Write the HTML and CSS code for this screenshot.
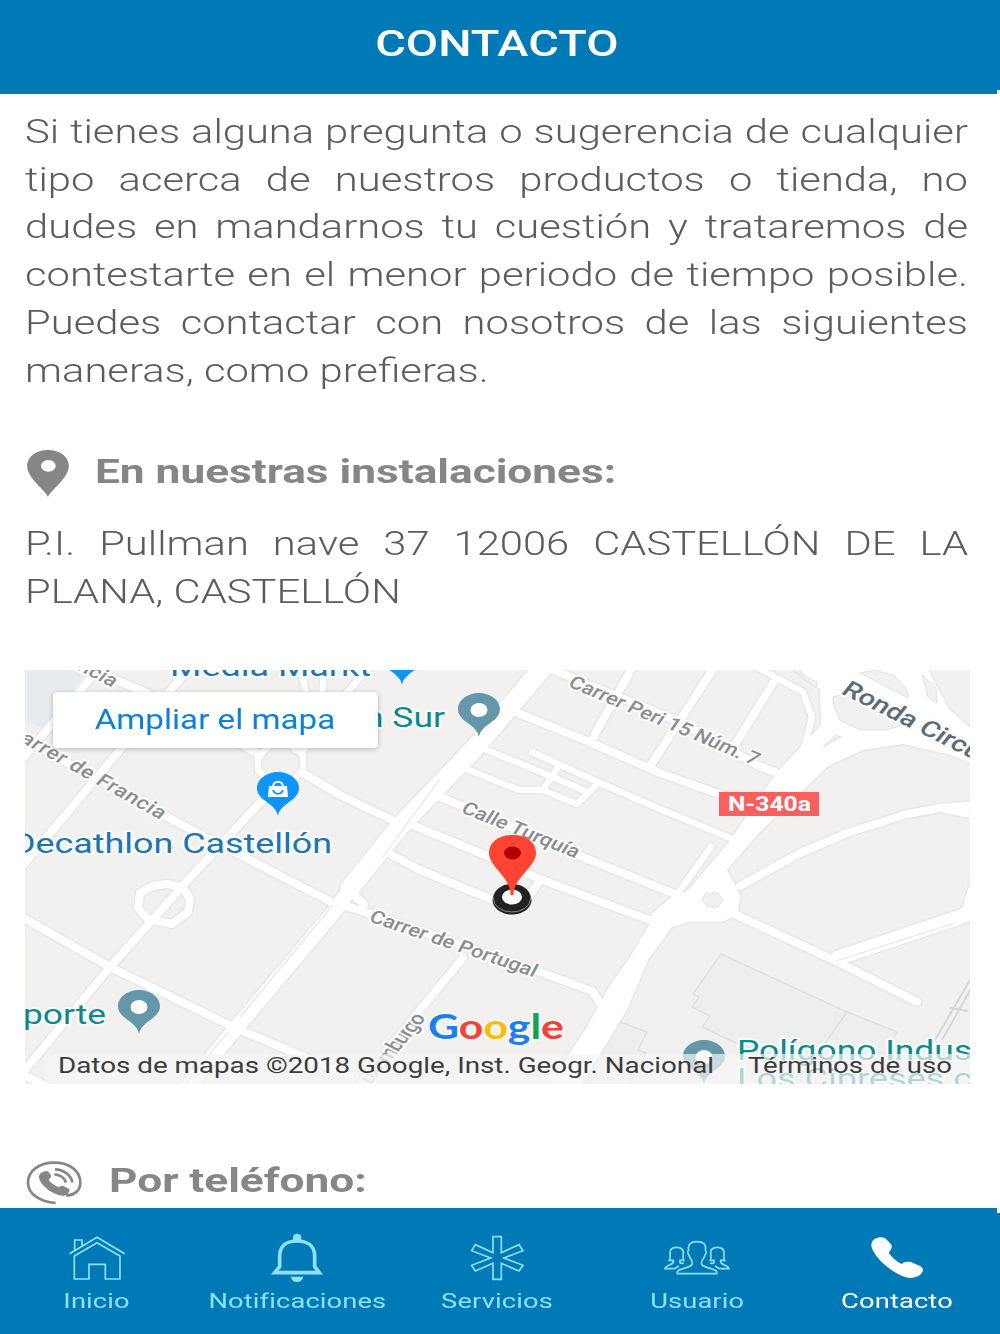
FILE: index.html
```
<!DOCTYPE html>
<html lang="es">
<head>
  <meta charset="UTF-8">
  <meta name="viewport" content="width=device-width, initial-scale=1.0">
  <title>Contacto</title>
  <link rel="stylesheet" href="styles.css">
</head>
<body>
  <header class="top-bar">
    <h1>CONTACTO</h1>
  </header>

  <main class="content">
    <p class="text intro">Si tienes alguna pregunta o sugerencia de cualquier tipo acerca de nuestros productos o tienda, no dudes en mandarnos tu cuestión y trataremos de contestarte en el menor periodo de tiempo posible. Puedes contactar con nosotros de las siguientes maneras, como prefieras.</p>

    <div class="section-title">
      <svg class="pin-icon" viewBox="78 57 132 148">
        <path fill-rule="evenodd" d="M144 202C136 180 81 145 81 108C81 80 108 60 144 60S207 80 207 108C207 145 152 180 144 202ZM145 90a22 18 0 1 0 .1 0Z"/>
      </svg>
      <h2>En nuestras instalaciones:</h2>
    </div>

    <p class="text address">P.I. Pullman nave 37 12006 CASTELLÓN DE LA PLANA, CASTELLÓN</p>

    <div class="map">
      <svg class="map-canvas" viewBox="25 670 945 414">
        <rect class="land" x="25" y="670" width="945" height="414"/>
        <path class="water" d="M25 670H86L48 728L25 722Z"/>

        <g class="building">
          <path d="M721 954L693 994L699 997L692 1007L710 1016L702 1027L740 1045L810 1065L847 1012Z"/>
          <path d="M847 1012L897 1032L870 1084H790L810 1065Z"/>
          <path d="M615 1020L647 1032L638 1050L646 1053L630 1084H585Z"/>
        </g>

        <g class="roads">
          <!-- calles del oeste -->
          <path class="r8" d="M20 762L100 667"/>
          <path class="r8" d="M20 869L120 750L192 665"/>
          <path class="r8" d="M20 737L167 817L217 843L333 903L353 908L540 972L592 991L602 1006"/>
          <path class="r8" d="M85 667L147 693L260 755"/>
          <path class="r8" d="M303 773L340 795L400 824"/>
          <path class="r8" d="M270 792L197 870L110 967L20 1076"/>
          <path class="r8" d="M20 916L110 967L233 1027L350 1076"/>
          <path class="r8" d="M20 1073L50 1088"/>
          <path class="r6" d="M300 667L308 700L298 750M324 667L322 700L304 750M370 667L295 750"/>
          <path class="r6" d="M271 744L290 744L303 755V770L292 781H270L258 770V757Z"/>
          <path class="r8" d="M153 886L167 884L183 888L190 899L188 912L172 924L148 919L138 908L140 893Z"/>

          <!-- avenida central -->
          <path class="r18" d="M546 664L473 750L400 826L350 888"/>
          <path class="r15" d="M365 868L333 913L237 1027L185 1090"/>
          <path class="r8" d="M350 890L364 905"/>

          <!-- calles del centro -->
          <path class="r8" d="M548 668L680 722L757 765L780 774"/>
          <path class="r8" d="M513 711L587 741L660 773L730 798"/>
          <path class="r6" d="M477 746L553 777L587 792"/>
          <path class="r6" d="M532 752L600 783L660 809L735 840"/>
          <path class="r6" d="M464 768L519 790L543 790L577 804L597 784M543 790L558 767"/>
          <path class="r8" d="M438 796L580 856L675 894"/>
          <path class="r8" d="M410 824L490 857L540 879L660 924"/>
          <path class="r8" d="M390 854L420 870L500 903M528 898L540 880"/>
          <path class="r8" d="M633 666L593 738M715 666L651 765M775 680L733 748"/>
          <path class="r8" d="M463 958L420 1010L355 1090"/>
          <path class="r6" d="M757 667L775 677L803 692L812 717L803 752"/>
          <path class="r6" d="M711 847L673 900L655 915"/>

          <!-- N-340a y Ronda -->
          <path class="fill" d="M797 667L820 690L821 725L777 772L728 843L690 888L680 895L655 915L628 960L610 985L585 1030L545 1090H578L627 1010L648 960L672 927L690 922L722 922L738 915L740 896L735 884L727 870L760 832L827 767L863 750L903 744L950 755L975 765V732L950 710L937 687L927 667Z"/>
          <path class="r8" d="M740 886L800 853L847 833L907 814L940 808L975 805M940 808L975 815"/>
          <path class="r8" d="M730 912L840 963L917 1002"/>
          <path class="r15" d="M838 958L960 917L980 908"/>
          <path class="r8" d="M964 915L975 880"/>
        </g>

        <!-- isletas dentro de las vías -->
        <g class="island">
          <path d="M833 697L833 704L840 720L860 730L887 730L908 723L850 692Z"/>
          <path d="M860 673L875 670L895 676L907 690L908 698Z"/>
          <path d="M922 675L936 688L937 703L928 697Z"/>
          <path d="M823 747L836 735L841 737Z"/>
          <path d="M793 671L817 682L816 688Z"/>
          <path d="M706 893H718L723 900L718 907H708L702 900Z"/>
        </g>
        <path class="median" d="M836 961L955 923M440 779L382 858M333 905L240 1017M228 1032L185 1084"/>
        <path class="rail" d="M970 980L935 1040M972 987L942 1040M950 1008L968 1011"/>

        <g class="street">
          <text transform="translate(76 669) scale(1.27 1) rotate(33)" textLength="34">ncia</text>
          <text transform="translate(19 741) scale(1.27 1) rotate(35.3)" textLength="136">arrer de Francia</text>
          <text transform="translate(567 686) scale(1.27 1) rotate(28.3)" textLength="168" lengthAdjust="spacingAndGlyphs">Carrer Peri 15 Núm. 7</text>
          <text transform="translate(460 812) scale(1.27 1) rotate(27)" textLength="102" lengthAdjust="spacingAndGlyphs">Calle Turquía</text>
          <text transform="translate(368 921) scale(1.27 1) rotate(23.3)" textLength="142" lengthAdjust="spacingAndGlyphs">Carrer de Portugal</text>
          <text transform="translate(371 1085) scale(1.27 1) rotate(-57)" textLength="80"><tspan class="faded">uxe</tspan>mburgo</text>
          <text class="ronda" transform="translate(840 693) scale(1.27 1) rotate(32.4)" textLength="126" lengthAdjust="spacingAndGlyphs">Ronda Circu</text>
        </g>

        <g class="place">
          <text class="shop" x="170" y="676" textLength="201" lengthAdjust="spacingAndGlyphs">Media Markt</text>
          <text class="shop" x="12" y="853" textLength="320" lengthAdjust="spacingAndGlyphs">Decathlon Castellón</text>
          <text x="364" y="727" textLength="81" lengthAdjust="spacingAndGlyphs">n Sur</text>
          <text x="23" y="1024" textLength="83" lengthAdjust="spacingAndGlyphs">porte</text>
          <text x="737" y="1060" textLength="235" lengthAdjust="spacingAndGlyphs">Polígono Indus</text>
          <text x="737" y="1088" textLength="235" lengthAdjust="spacingAndGlyphs">Los Cipreses c</text>
        </g>

        <defs>
          <path id="poi" d="M0 0C-2 -13 -21 -15 -21 -28C-21 -37 -11 -44 0 -44S21 -37 21 -28C21 -15 2 -13 0 0Z"/>
        </defs>
        <use href="#poi" class="poi-blue" x="402" y="685"/>
        <use href="#poi" class="poi-blue" x="278" y="816"/>
        <use href="#poi" class="poi-teal" x="479" y="737"/>
        <use href="#poi" class="poi-teal" x="139" y="1034"/>
        <use href="#poi" class="poi-teal" x="704" y="1084"/>
        <g class="dot">
          <ellipse cx="479" cy="710" rx="8.5" ry="7"/>
          <ellipse cx="139" cy="1007" rx="8.5" ry="7"/>
          <ellipse cx="704" cy="1057" rx="8.5" ry="7"/>
        </g>
        <path class="bag" d="M269 786H287L288 797H268Z"/>
        <path class="bag-handle" d="M273 787C273 780 283 780 283 787"/>
        <path class="bag-smile" d="M273 790C275 795 281 795 283 790"/>

        <rect class="shield" x="719" y="792" width="100" height="24"/>
        <text class="shield-text" x="728" y="811" textLength="83" lengthAdjust="spacingAndGlyphs">N-340a</text>

        <ellipse class="base-side" cx="512" cy="900" rx="19.5" ry="14.5"/>
        <ellipse class="base-rim" cx="512" cy="899" rx="18.5" ry="13"/>
        <ellipse class="base" cx="512" cy="896.500" rx="18" ry="12.500"/>
        <ellipse class="base-hole" cx="512" cy="897" rx="10" ry="7.5"/>
        <path class="marker" d="M510.500 895C511 877 489 867 489 853C489 842 499 835 512.500 835S536 842 536 853C536 867 514 877 513.500 895Z"/>
        <ellipse class="marker-dot" cx="512.500" cy="853" rx="8.500" ry="6.500"/>

        <text class="google" x="428" y="1039" textLength="136" lengthAdjust="spacingAndGlyphs"><tspan class="g-blue">G</tspan><tspan class="g-red">o</tspan><tspan class="g-yellow">o</tspan><tspan class="g-blue">g</tspan><tspan class="g-green">l</tspan><tspan class="g-red">e</tspan></text>

        <rect class="credits-bg" x="45" y="1054" width="925" height="30"/>
        <text class="credits" x="58" y="1073" textLength="656" lengthAdjust="spacingAndGlyphs">Datos de mapas ©2018 Google, Inst. Geogr. Nacional</text>
        <text class="credits" x="748" y="1073" textLength="204" lengthAdjust="spacingAndGlyphs">Términos de uso</text>
      </svg>
      <a class="map-button" href="#"><span>Ampliar el mapa</span></a>
    </div>

    <div class="section-title phone-title">
      <svg class="call-icon" viewBox="75 27 177 141">
        <path class="ring" d="M167 159C120 155 84 132 84 98C84 62 118 38 163 38S241 62 241 98C241 122 222 137 198 136"/>
        <path d="M117 78C120 66 134 62 144 64L153 76C155 82 148 86 146 90C152 98 164 106 176 112C181 108 186 106 190 108L208 117C211 123 203 134 192 137C164 139 115 104 117 78Z"/>
        <path class="wave" d="M163 73C180 74 194 84 198 98M165 58C192 59 214 76 217 98"/>
      </svg>
      <h2>Por teléfono:</h2>
    </div>
  </main>

  <nav class="tab-bar">
    <a class="tab" href="#">
      <svg viewBox="183 240 216 156">
        <path d="M209 311L291 262L374 311M223 318V387H267V343H316V387H360V318L291 278ZM224 301V270H246V288"/>
      </svg>
      <span>Inicio</span>
    </a>
    <a class="tab" href="#">
      <svg viewBox="783 240 216 156">
        <path class="thick" d="M839 350V318C839 286 862 273 891 273S944 286 944 318V350L958 368H824Z"/>
        <path class="solid" d="M879 270V262C879 248 904 248 904 262V270ZM873 380H909C908 401 874 401 873 380Z"/>
      </svg>
      <span>Notificaciones</span>
    </a>
    <a class="tab" href="#">
      <svg viewBox="183 90 216 156">
        <path d="M279 110H304V158L357 134L369 152L312 174L369 196L357 213L304 190V238H279V190L226 213L215 196L272 174L215 152L226 134L279 158Z"/>
      </svg>
      <span>Servicios</span>
    </a>
    <a class="tab" href="#">
      <svg viewBox="123 90 216 156">
        <path d="M172 221V215C178 202 217 206 217 190C217 180 209 176 207 165C202 160 203 153 206 150C202 133 213 125 231 125S260 133 256 150C259 153 260 160 255 165C253 176 244 180 244 190C244 206 284 202 290 215V221Z"/>
        <path d="M192 189C184 192 178 190 180 181H191C187 172 190 168 190 158C190 147 183 142 170 142S150 147 150 158C150 168 153 172 148 181H160C164 197 138 192 135 206H164L177 198"/>
        <path d="M270 189C278 192 284 190 282 181H271C275 172 272 168 272 158C272 147 279 142 292 142S312 147 312 158C312 168 309 172 314 181H302C298 197 324 192 327 206H298L285 198"/>
      </svg>
      <span>Usuario</span>
    </a>
    <a class="tab active" href="#">
      <svg viewBox="723 90 216 156">
        <path class="solid" d="M757 124C765 112 785 108 796 115L813 133C819 143 812 150 806 158C815 172 830 184 844 192C852 186 862 184 872 186L900 198C911 205 911 212 905 220C895 232 875 237 858 232C815 218 770 180 756 145C753 138 753 131 757 124Z"/>
      </svg>
      <span>Contacto</span>
    </a>
  </nav>
</body>
</html>
```
FILE: styles.css
```
:root {
  --blue: #007ab6;
  --stretch: 1.228;
  --stretch-wide: 1.3;
}

* {
  box-sizing: border-box;
}

html {
  background: linear-gradient(var(--blue) 90px, #fff 90px, #fff 1213px, var(--blue) 1213px);
}

body {
  margin: 0;
  width: 997px;
  height: 1334px;
  display: flex;
  flex-direction: column;
  overflow: hidden;
  font-family: Roboto, "Liberation Sans", sans-serif;
}

h1, h2, p {
  margin: 0;
}

/* the type is wider than the regular cut */
.text, .map-button span {
  transform: scaleX(var(--stretch));
}

h2, .tab span {
  transform: scaleX(var(--stretch-wide));
}

.top-bar {
  height: 94px;
  flex: none;
  display: flex;
  justify-content: center;
  padding-right: 3px;
  background: var(--blue);
  color: #fff;
}

h1 {
  font-size: 37px;
  font-weight: 500;
  line-height: 88px;
  transform: scaleX(1.27);
}

.content {
  flex: 1;
  min-height: 0;
  overflow: hidden;
  padding: 14px 28px 0 25px;
  background: #fff;
}

.text {
  width: calc(943px / var(--stretch));
  font-size: 34px;
  font-weight: 300;
  line-height: 47.7px;
  text-align: justify;
  color: #5c5c5c;
  transform-origin: left top;
}

.section-title {
  display: flex;
  align-items: center;
  gap: 25px;
  height: 50px;
  margin-top: 54px;
  fill: #868686;
}

h2 {
  padding-bottom: 4px;
  font-size: 34px;
  font-weight: 700;
  line-height: 44px;
  color: #868686;
  white-space: nowrap;
  transform-origin: left center;
}

.pin-icon {
  width: 44px;
  height: 49px;
  margin-left: 1px;
}

.address {
  margin-top: 22px;
}

.map {
  position: relative;
  width: 945px;
  height: 414px;
  margin-top: 54.5px;
}

.map-canvas {
  display: block;
  width: 100%;
  height: 100%;
}

.land,
.island {
  fill: #f2f1f0;
}

.island {
  stroke: #e2e2e3;
}

.water {
  fill: #e8ecee;
}

.building {
  fill: #eeeeee;
  stroke: #e0e0e1;
  stroke-width: 1.5;
}

.roads {
  fill: none;
  stroke: #fff;
  stroke-linecap: round;
  stroke-linejoin: round;
  filter: drop-shadow(0 0 1.2px #cfcfd2);
}

.r6 { stroke-width: 6.5; }
.r8 { stroke-width: 8; }
.r15 { stroke-width: 15; }
.r18 { stroke-width: 19; }

.roads .fill {
  fill: #fff;
  stroke: none;
}

.median {
  fill: none;
  stroke: #e6e6e8;
  stroke-width: 1.2;
}

.rail {
  fill: none;
  stroke: #d4d8dc;
  stroke-width: 2;
}

.street text,
.place text {
  stroke: #fafafa;
  stroke-width: 4;
  stroke-linejoin: round;
  paint-order: stroke;
}

.street {
  font-size: 18px;
  font-weight: 500;
  fill: #8a8d90;
}

.street .faded {
  fill: #c4c6c8;
}

.street .ronda {
  font-size: 22px;
  fill: #5d6c74;
}

.place {
  font-size: 27px;
  fill: #0a8a8f;
}

.place .shop {
  fill: #1b75b0;
}

.poi-blue {
  fill: #0d96f8;
}

.poi-teal {
  fill: #6497a9;
}

.dot,
.bag {
  fill: #fff;
}

.bag-handle,
.bag-smile {
  fill: none;
  stroke: #fff;
  stroke-width: 2;
}

.bag-smile {
  stroke: #0d96f8;
}

.shield {
  fill: #f95f5f;
}

.shield-text {
  font-size: 20px;
  font-weight: 700;
  fill: #fff;
}

.base-side,
.base {
  fill: #222;
}

.base-rim {
  fill: none;
  stroke: #8a8a86;
}

.base-hole {
  fill: #fff;
}

.marker {
  fill: #ff4433;
}

.marker-dot {
  fill: #b10000;
}

.google {
  font-family: Lato, sans-serif;
  font-size: 34px;
  font-weight: 700;
  stroke: #fafafa;
  stroke-width: 3;
  paint-order: stroke;
}

.g-blue { fill: #1a80f0; }
.g-red { fill: #f44336; }
.g-yellow { fill: #fbbc05; }
.g-green { fill: #10a452; }

.credits-bg {
  fill: #f5f5f5;
  opacity: 0.7;
}

.credits {
  font-size: 22px;
  fill: #3c3c3c;
}

.map-button {
  position: absolute;
  left: 28px;
  top: 22px;
  width: 325px;
  height: 56px;
  display: flex;
  align-items: center;
  justify-content: center;
  padding-right: 2px;
  border-radius: 4px;
  background: #fff;
  box-shadow: 0 1px 5px rgba(0, 0, 0, 0.25);
  color: #0d80d8;
  font-size: 27px;
  text-decoration: none;
  white-space: nowrap;
}

.phone-title {
  margin-top: 73px;
}

.call-icon {
  width: 59px;
  height: 47px;
}

.ring,
.wave {
  fill: none;
  stroke: #868686;
  stroke-width: 8;
}

.tab-bar {
  flex: none;
  display: flex;
  width: 1000px;
  height: 126px;
  padding-top: 22px;
  margin-left: -3px;
  background: var(--blue);
}

.tab {
  flex: 1;
  display: flex;
  flex-direction: column;
  align-items: center;
  gap: 7px;
  color: #8fe0f8;
  font-size: 21px;
  letter-spacing: 0.1px;
  line-height: 24px;
  text-decoration: none;
}

.tab svg {
  width: 72px;
  height: 52px;
  fill: none;
  stroke: currentColor;
  stroke-width: 5;
}

.tab .thick {
  stroke-width: 11;
}

.tab .solid {
  fill: currentColor;
  stroke: none;
}

.tab.active {
  color: #fff;
}
```
